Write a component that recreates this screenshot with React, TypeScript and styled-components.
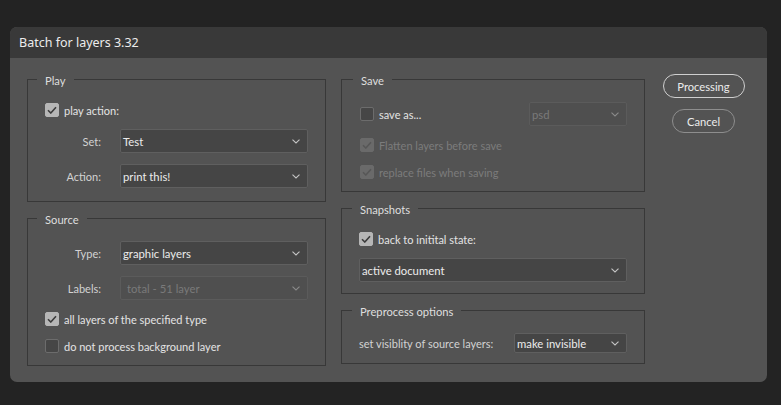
import React from "react";
import styled, { createGlobalStyle } from "styled-components";

const Global = createGlobalStyle`
  html, body { margin: 0; padding: 0; background: #232323; }
  body { font-family: Lato, "Noto Sans", sans-serif; font-size: 11px; color: #e2e2e2; }
  * { box-sizing: border-box; }
`;

const Page = styled.div`
  width: 781px;
  height: 405px;
  padding: 27px 0 0 10px;
`;

const Dialog = styled.div`
  width: 757px;
  height: 355px;
  background: #535353;
  border-radius: 7px;
  overflow: hidden;
  display: flex;
  flex-direction: column;
`;

const TitleBar = styled.div`
  height: 31px;
  background: #393939;
  display: flex;
  align-items: center;
  padding-left: 9px;
  font-family: "Noto Sans", sans-serif;
  font-size: 12.5px;
  color: #ececec;
`;

const Body = styled.div`
  display: grid;
  grid-template-columns: 299px 304px 82px;
  column-gap: 15px;
  padding: 11px 0 0 17px;
  & > :nth-child(3) { margin-left: 5px; }
`;

const Column = styled.div`
  display: flex;
  flex-direction: column;
  gap: ${(p: { $gap: number }) => p.$gap}px;
`;

const Panel = styled.fieldset<{ $h: number; $pl: number; $pr: number }>`
  margin: 0;
  height: ${(p) => p.$h}px;
  border: 1px solid #383838;
  border-radius: 0;
  padding: 13px ${(p) => p.$pr}px 0 ${(p) => p.$pl}px;
  display: flex;
  flex-direction: column;
  gap: 11px;
  min-width: 0;
`;

const Legend = styled.legend<{ $ml: number }>`
  font-size: 11.2px;
  line-height: 16px;
  height: 20px;
  padding: 4px 8px 0;
  margin-left: ${(p) => p.$ml}px;
  color: #dedede;
`;

const CheckRow = styled.label<{ $disabled?: boolean; $h?: number }>`
  display: flex;
  align-items: center;
  gap: 5px;
  height: ${(p) => p.$h ?? 16}px;
  color: ${(p) => (p.$disabled ? "#7c7c7c" : "#e4e4e4")};
`;

const Box = styled.span<{ $checked?: boolean; $disabled?: boolean }>`
  width: 14px;
  height: 14px;
  border-radius: 2px;
  flex: none;
  display: flex;
  align-items: center;
  justify-content: center;
  background: ${(p) =>
    p.$disabled ? "#6a6a6a" : p.$checked ? "#b6b6b6" : "#464646"};
  border: 1px solid ${(p) =>
    p.$disabled ? "#6a6a6a" : p.$checked ? "#b6b6b6" : "#6c6c6c"};
`;

const FieldRow = styled.div`
  display: grid;
  grid-template-columns: 56px 188px;
  column-gap: 19px;
  align-items: center;
`;

const FieldLabel = styled.span`
  text-align: right;
  color: #d2d2d2;
`;

const SelectBox = styled.div<{ $w?: number; $h?: number; $disabled?: boolean; $pad?: number }>`
  width: ${(p) => (p.$w ? `${p.$w}px` : "100%")};
  height: ${(p) => p.$h ?? 24}px;
  background: ${(p) => (p.$disabled ? "#4f4f4f" : "#454545")};
  border: 1px solid ${(p) => (p.$disabled ? "#5b5b5b" : "#5f5f5f")};
  border-radius: 2px;
  display: flex;
  align-items: center;
  justify-content: space-between;
  padding: 0 7px 0 ${(p) => p.$pad ?? 2}px;
  color: ${(p) => (p.$disabled ? "#7a7a7a" : "#ececec")};
  font-size: 11.3px;
`;

const SplitRow = styled.div`
  display: flex;
  align-items: center;
  justify-content: space-between;
`;

const Buttons = styled.div`
  display: flex;
  flex-direction: column;
  align-items: center;
  gap: 11px;
  padding-top: 5px;
`;

const PillButton = styled.button<{ $primary?: boolean; $w: number }>`
  width: ${(p) => p.$w}px;
  height: 24px;
  border-radius: 12px;
  background: transparent;
  border: 1.5px solid ${(p) => (p.$primary ? "#cfcfcf" : "#8e8e8e")};
  color: #ececec;
  font-family: inherit;
  font-size: 11.2px;
  padding: 0;
  cursor: pointer;
`;

const Check = ({ color }: { color: string }) => (
  <svg width="10" height="8" viewBox="0 0 10 8">
    <path d="M1 4.2 L3.8 7 L9 1.2" fill="none" stroke={color} strokeWidth="1.6" />
  </svg>
);

const Chevron = ({ color }: { color: string }) => (
  <svg width="8" height="5" viewBox="0 0 8 5">
    <path d="M0.5 0.7 L4 4 L7.5 0.7" fill="none" stroke={color} strokeWidth="1.1" />
  </svg>
);

const Checkbox = ({
  checked,
  disabled,
  children,
  h,
}: {
  checked?: boolean;
  disabled?: boolean;
  children: React.ReactNode;
  h?: number;
}) => (
  <CheckRow $disabled={disabled} $h={h}>
    <Box $checked={checked} $disabled={disabled}>
      {checked && <Check color={disabled ? "#575757" : "#3c3c3c"} />}
    </Box>
    {children}
  </CheckRow>
);

const Select = ({
  value,
  disabled,
  w,
  h,
  pad,
}: {
  value: string;
  disabled?: boolean;
  w?: number;
  h?: number;
  pad?: number;
}) => (
  <SelectBox $disabled={disabled} $w={w} $h={h} $pad={pad}>
    <span>{value}</span>
    <Chevron color={disabled ? "#8a8a8a" : "#c4c4c4"} />
  </SelectBox>
);

export default function App() {
  return (
    <Page>
      <Global />
      <Dialog>
        <TitleBar>Batch for layers 3.32</TitleBar>
        <Body>
          <Column $gap={6}>
            <Panel $h={133} $pl={17} $pr={17}>
              <Legend $ml={-8}>Play</Legend>
              <Checkbox checked>play action:</Checkbox>
              <FieldRow>
                <FieldLabel>Set:</FieldLabel>
                <Select value="Test" />
              </FieldRow>
              <FieldRow>
                <FieldLabel>Action:</FieldLabel>
                <Select value="print this!" />
              </FieldRow>
            </Panel>
            <Panel $h={158} $pl={17} $pr={17}>
              <Legend $ml={-8}>Source</Legend>
              <FieldRow>
                <FieldLabel>Type:</FieldLabel>
                <Select value="graphic layers" />
              </FieldRow>
              <FieldRow>
                <FieldLabel>Labels:</FieldLabel>
                <Select value="total - 51 layer" disabled pad={6} />
              </FieldRow>
              <Checkbox checked>all layers of the specified type</Checkbox>
              <Checkbox>do not process background layer</Checkbox>
            </Panel>
          </Column>
          <Column $gap={6}>
            <Panel $h={123} $pl={18} $pr={17}>
              <Legend $ml={-7}>Save</Legend>
              <SplitRow>
                <Checkbox h={24}>save as...</Checkbox>
                <Select value="psd" w={98} disabled />
              </SplitRow>
              <Checkbox checked disabled>Flatten layers before save</Checkbox>
              <Checkbox checked disabled>replace files when saving</Checkbox>
            </Panel>
            <Panel $h={96} $pl={17} $pr={17}>
              <Legend $ml={-7}>Snapshots</Legend>
              <Checkbox checked>back to initital state:</Checkbox>
              <Select value="active document" />
            </Panel>
            <Panel $h={64} $pl={17} $pr={17}>
              <Legend $ml={-7}>Preprocess options</Legend>
              <SplitRow>
                <FieldLabel>set visiblity of source layers:</FieldLabel>
                <Select value="make invisible" w={113} h={20} />
              </SplitRow>
            </Panel>
          </Column>
          <Buttons>
            <PillButton $primary $w={82}>Processing</PillButton>
            <PillButton $w={63}>Cancel</PillButton>
          </Buttons>
        </Body>
      </Dialog>
    </Page>
  );
}
